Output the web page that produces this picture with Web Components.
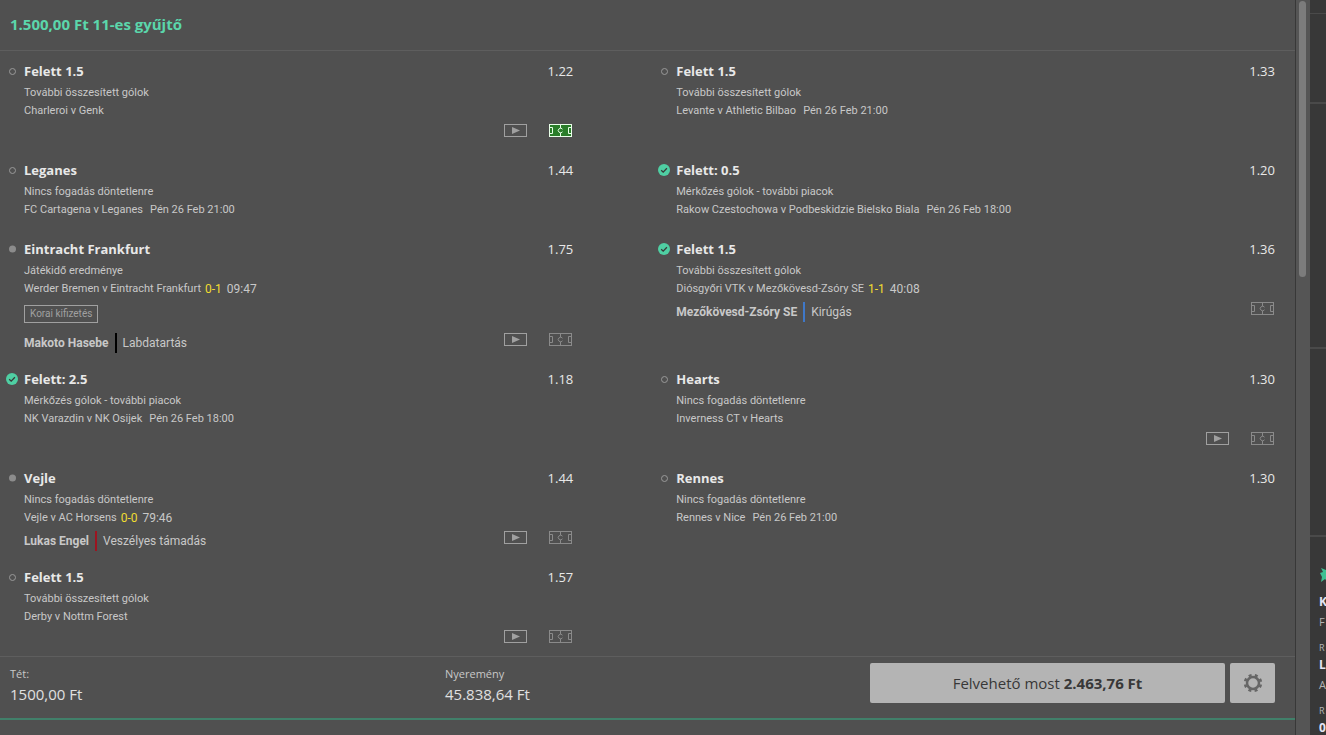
<!DOCTYPE html>
<html lang="hu">
<head>
<meta charset="utf-8">
<title>Fogadások</title>
<style>
  html, body { height: 100%; }
  body {
    margin: 0;
    background: #505050;
    color: #c8c8c8;
    font-family: "Open Sans", "Noto Sans", sans-serif;
    overflow: hidden;
  }
</style>
</head>
<body>
<my-bets></my-bets>

<script>
(function () {

  const BETS = [
    { pick: "Felett 1.5", odds: "1.22", market: "További összesített gólok", match: "Charleroi v Genk", video: true, pitch: "on" },
    { pick: "Felett 1.5", odds: "1.33", market: "További összesített gólok", match: "Levante v Athletic Bilbao", date: "Pén 26 Feb 21:00" },
    { pick: "Leganes", odds: "1.44", market: "Nincs fogadás döntetlenre", match: "FC Cartagena v Leganes", date: "Pén 26 Feb 21:00" },
    { pick: "Felett: 0.5", odds: "1.20", state: "won", market: "Mérkőzés gólok - további piacok", match: "Rakow Czestochowa v Podbeskidzie Bielsko Biala", date: "Pén 26 Feb 18:00" },
    { pick: "Eintracht Frankfurt", odds: "1.75", state: "live", market: "Játékidő eredménye", match: "Werder Bremen v Eintracht Frankfurt", score: "0-1", clock: "09:47", badge: "Korai kifizetés", who: "Makoto Hasebe", what: "Labdatartás", color: "#000", video: true, pitch: "off" },
    { pick: "Felett 1.5", odds: "1.36", state: "won", market: "További összesített gólok", match: "Diósgyőri VTK v Mezőkövesd-Zsóry SE", score: "1-1", clock: "40:08", who: "Mezőkövesd-Zsóry SE", what: "Kirúgás", color: "#3f78c8", pitch: "off" },
    { pick: "Felett: 2.5", odds: "1.18", state: "won", market: "Mérkőzés gólok - további piacok", match: "NK Varazdin v NK Osijek", date: "Pén 26 Feb 18:00" },
    { pick: "Hearts", odds: "1.30", market: "Nincs fogadás döntetlenre", match: "Inverness CT v Hearts", video: true, pitch: "off" },
    { pick: "Vejle", odds: "1.44", state: "live", market: "Nincs fogadás döntetlenre", match: "Vejle v AC Horsens", score: "0-0", clock: "79:46", who: "Lukas Engel", what: "Veszélyes támadás", color: "#9c1420", video: true, pitch: "off" },
    { pick: "Rennes", odds: "1.30", market: "Nincs fogadás döntetlenre", match: "Rennes v Nice", date: "Pén 26 Feb 21:00" },
    { pick: "Felett 1.5", odds: "1.57", market: "További összesített gólok", match: "Derby v Nottm Forest", video: true, pitch: "off" }
  ];

  // ====== STATUS DOT ======
  class BetStatus extends HTMLElement {
    connectedCallback() {
      const state = this.getAttribute("state");
      let shape = `<circle cx="6.5" cy="6.5" r="3" fill="none" stroke="#999"/>`;
      if (state === "live") {
        shape = `<circle cx="6.5" cy="6" r="3.5" fill="#8c8c8c"/>`;
      }
      if (state === "won") {
        shape = `<circle cx="6" cy="6" r="6" fill="#4fcfa3"/>
          <path d="M3.2 6.2 5.2 8.1 8.9 4.3" fill="none" stroke="#383838" stroke-width="1.3"/>`;
      }
      this.attachShadow({ mode: "open" }).innerHTML = `
        <style>
          :host { display: block; width: 12px; height: 12px; }
          svg { display: block; }
        </style>
        <svg width="12" height="12" viewBox="0 0 12 12" aria-hidden="true">${shape}</svg>
      `;
    }
  }

  // ====== VIDEO / PITCH BUTTONS ======
  class MediaButton extends HTMLElement {
    connectedCallback() {
      const kind = this.getAttribute("kind");
      const active = this.hasAttribute("active");
      const art = kind === "video"
        ? `<rect x=".5" y=".5" width="22" height="12"/>
           <path d="M8 3v7l8-3.5z" fill="currentColor" stroke="none"/>`
        : `<rect x=".5" y=".5" width="22" height="12" ${active ? 'fill="#2a7d2a"' : ""}/>
           <path d="M1 3.5h2.5v6H1M22 3.5h-2.5v6H22M11.5 0v4M11.5 9v4"/>
           <path d="M13.5 5.2A2.3 2.3 0 1 0 13.5 7.8"/>`;
      this.attachShadow({ mode: "open" }).innerHTML = `
        <style>
          :host { display: block; }
          button {
            display: block;
            padding: 0;
            border: 0;
            background: none;
            color: ${active ? "#e8ffe8" : kind === "video" ? "#a0a0a0" : "#8a8a8a"};
            cursor: pointer;
          }
          svg { display: block; }
        </style>
        <button type="button" aria-label="${kind === "video" ? "Videó" : "Pálya"}">
          <svg width="23" height="13" viewBox="0 0 23 13" fill="none" stroke="currentColor">${art}</svg>
        </button>
      `;
    }
  }

  // ====== ONE SELECTION ======
  class BetSelection extends HTMLElement {
    constructor() {
      super();
      this.attachShadow({ mode: "open" });
    }

    set bet(val) {
      this._bet = val;
      this.render();
    }

    createFooterHTML(b) {
      if (!b.who && !b.video && !b.pitch) return "";
      return `
        <div class="footer">
          ${b.who ? `<div class="event"><b>${b.who}</b><i></i><span>${b.what}</span></div>` : ""}
          <div class="media">
            ${b.video ? `<media-button kind="video"></media-button>` : ""}
            ${b.pitch ? `<media-button kind="pitch" ${b.pitch === "on" ? "active" : ""}></media-button>` : ""}
          </div>
        </div>`;
    }

    render() {
      const b = this._bet;
      const footer = this.createFooterHTML(b);
      this.shadowRoot.innerHTML = `
        <style>
          :host {
            display: grid;
            grid-template-columns: 12px 1fr;
            column-gap: 6px;
            align-items: start;
            padding: 10px 20px 0 6px;
            font-family: Roboto, "Open Sans", sans-serif;
            font-size: 11px;
            line-height: 18px;
          }
          bet-status { margin-top: 4px; }
          .head {
            display: flex;
            justify-content: space-between;
            margin-bottom: 3px;
            color: #e8e8e8;
            font-family: "Open Sans", sans-serif;
            font-size: 13px;
            line-height: 20px;
          }
          .match { display: flex; height: 17px; white-space: nowrap; }
          .date { margin-left: 7px; }
          .score { margin-left: 4px; color: #f0dc30; font-size: 12px; }
          .clock { margin-left: 5px; font-size: 12px; }
          .early { padding: 8px 0 5px; display: flex; }
          .early span {
            padding: 0 5px;
            border: 1px solid #a0a0a0;
            color: #a0a0a0;
            font-size: 10px;
            line-height: 16px;
          }
          .footer {
            display: flex;
            align-items: flex-start;
            height: 26px;
            padding-top: 5px;
          }
          .event {
            display: flex;
            font-size: 12px;
            line-height: 20px;
            white-space: nowrap;
          }
          .event i { width: 2px; margin: 0 6px; background: ${b.color || "none"}; }
          .media { display: flex; gap: 22px; margin: 0 1px 0 auto; }
          .end { height: 11px; }
        </style>
        <bet-status state="${b.state || "open"}"></bet-status>
        <div>
          <div class="head"><b>${b.pick}</b><span>${b.odds}</span></div>
          <div>${b.market}</div>
          <div class="match">
            <span>${b.match}</span>
            ${b.date ? `<span class="date">${b.date}</span>` : ""}
            ${b.score ? `<span class="score">${b.score}</span><span class="clock">${b.clock}</span>` : ""}
          </div>
          ${b.badge ? `<div class="early"><span>${b.badge}</span></div>` : ""}
          ${footer || `<div class="end"></div>`}
        </div>
      `;
    }
  }

  // ====== LABEL + AMOUNT ======
  class BetAmount extends HTMLElement {
    connectedCallback() {
      this.attachShadow({ mode: "open" }).innerHTML = `
        <style>
          :host { display: block; color: #e0e0e0; font-size: 15px; line-height: 18px; }
          .label { color: #c8c8c8; font-size: 11px; line-height: 22px; }
        </style>
        <div class="label">${this.getAttribute("label")}</div>
        <slot></slot>
      `;
    }
  }

  // ====== CASH OUT ======
  class CashOut extends HTMLElement {
    connectedCallback() {
      this.attachShadow({ mode: "open" }).innerHTML = `
        <style>
          :host { display: flex; align-items: flex-start; gap: 5px; }
          button {
            height: 40px;
            padding: 0;
            border: 0;
            border-radius: 2px;
            background: #b4b4b4;
            color: #383838;
            font: inherit;
            font-size: 15px;
            cursor: pointer;
          }
          .main { flex: 1; }
          .gear { display: grid; place-items: center; width: 45px; }
        </style>
        <button class="main" type="button"><slot></slot></button>
        <button class="gear" type="button" aria-label="Beállítások">
          <svg width="20" height="20" viewBox="0 0 20 20" fill="none" stroke="#666">
            <circle cx="10" cy="10" r="6" stroke-width="2.5"/>
            <circle cx="10" cy="10" r="8" stroke-width="2.5" stroke-dasharray="3 3.283" stroke-dashoffset="-1.6"/>
          </svg>
        </button>
      `;
    }
  }

  // ====== PAGE BEHIND, ON THE RIGHT ======
  class SideRail extends HTMLElement {
    connectedCallback() {
      this.attachShadow({ mode: "open" }).innerHTML = `
        <style>
          :host {
            display: block;
            overflow: hidden;
            background: #383838;
            color: #b4b4b4;
            font-size: 11px;
            line-height: 20px;
          }
          .block { box-sizing: border-box; border-bottom: 2px solid #4a4a4a; }
          .a { height: 14px; border-width: 1px; }
          .b { height: 90px; }
          .c { height: 245px; }
          .d { height: 188px; }
          .list { padding: 28px 0 0 9px; }
          svg { display: block; margin-bottom: 9px; }
          .small { margin-top: 8px; font-size: 9px; line-height: 15px; }
          b { display: block; color: #e4e4f4; font-size: 12px; line-height: 20px; }
        </style>
        <div class="block a"></div>
        <div class="block b"></div>
        <div class="block c"></div>
        <div class="block d"></div>
        <div class="list">
          <svg width="18" height="18" viewBox="0 0 18 18" fill="#3fbf92"><path d="M2 3l5 2 2-5 2 5 5-2-2 5 3 3-5 1-3 5-3-3-4 3 1-5-2-4 3-1z"/></svg>
          <b>K</b>
          <div>F</div>
          <div class="small">R</div>
          <b>L</b>
          <div>A</div>
          <div class="small">R</div>
          <b>0</b>
        </div>
      `;
    }
  }

  // ====== WHOLE PAGE ======
  class MyBets extends HTMLElement {
    connectedCallback() {
      this.attachShadow({ mode: "open" }).innerHTML = `
        <style>
          :host {
            display: grid;
            grid-template-columns: 1fr 15px 16px;
            height: 100vh;
          }
          main { min-width: 0; overflow: hidden; }
          h1 {
            margin: 0;
            padding: 0 10px 2px;
            border-bottom: 1px solid #5e5e5e;
            color: #5bd6ab;
            font-size: 15px;
            line-height: 48px;
          }
          .list {
            display: grid;
            grid-template-columns: 12fr 13fr;
            column-gap: 59px;
            align-items: start;
          }
          .summary {
            display: grid;
            grid-template-columns: 435px 1fr 405px;
            padding: 6px 20px 15px 10px;
            border-top: 1px solid #5e5e5e;
            border-bottom: 2px solid #41806a;
          }
          .bar { padding: 1px 4px 0 3px; border-left: 1px solid #383838; background: #555; }
          .thumb { height: 276px; border-radius: 4px; background: #7c7c7c; }
        </style>
        <main>
          <h1>1.500,00 Ft 11-es gyűjtő</h1>
          <div class="list"></div>
          <div class="summary">
            <bet-amount label="Tét:">1500,00 Ft</bet-amount>
            <bet-amount label="Nyeremény">45.838,64 Ft</bet-amount>
            <cash-out>Felvehető most <b>2.463,76 Ft</b></cash-out>
          </div>
        </main>
        <div class="bar"><div class="thumb"></div></div>
        <side-rail></side-rail>
      `;
      const list = this.shadowRoot.querySelector(".list");
      BETS.forEach(bet => {
        const el = document.createElement("bet-selection");
        el.bet = bet;
        list.appendChild(el);
      });
    }
  }

  customElements.define("bet-status", BetStatus);
  customElements.define("media-button", MediaButton);
  customElements.define("bet-selection", BetSelection);
  customElements.define("bet-amount", BetAmount);
  customElements.define("cash-out", CashOut);
  customElements.define("side-rail", SideRail);
  customElements.define("my-bets", MyBets);

})();
</script>
</body>
</html>
